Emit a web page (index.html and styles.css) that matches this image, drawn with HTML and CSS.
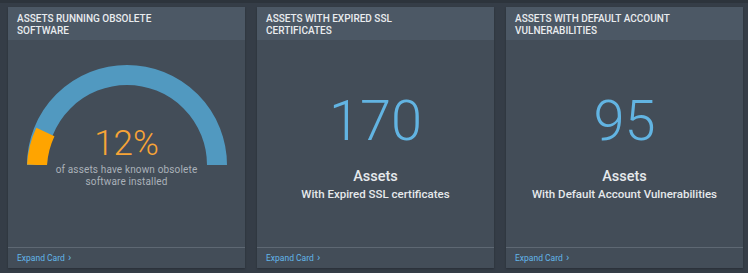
FILE: index.html
```html
<!DOCTYPE html>
<html lang="en">
  <head>
    <meta charset="UTF-8" />
    <meta name="viewport" content="width=device-width, initial-scale=1.0" />
    <title>Asset Cards</title>
    <link rel="stylesheet" href="styles.css">
  </head>
  <body>
    <div class="cards">
      <div class="card">
        <div class="card-header">Assets Running Obsolete Software</div>
        <div class="card-body">
          <div class="gauge">
            <svg width="200" height="100" viewBox="0 0 200 100">
              <path d="M 10 100 A 90 90 0 0 1 190 100" fill="none" stroke="#5199c0" stroke-width="20" />
              <path d="M 10 100 A 90 90 0 0 1 18.4 66.9" fill="none" stroke="#ffa400" stroke-width="20" />
            </svg>
            <div class="gauge-text">
              <div class="gauge-value">12%</div>
              <div class="gauge-label">of assets have known obsolete<br>software installed</div>
            </div>
          </div>
        </div>
        <div class="card-footer">Expand Card <span class="chev">&#8250;</span></div>
      </div>

      <div class="card">
        <div class="card-header">Assets With Expired SSL Certificates</div>
        <div class="card-body stat">
          <div class="stat-value">170</div>
          <div class="stat-title">Assets</div>
          <div class="stat-sub">With Expired SSL certificates</div>
        </div>
        <div class="card-footer">Expand Card <span class="chev">&#8250;</span></div>
      </div>

      <div class="card">
        <div class="card-header">Assets With Default Account Vulnerabilities</div>
        <div class="card-body stat">
          <div class="stat-value">95</div>
          <div class="stat-title">Assets</div>
          <div class="stat-sub">With Default Account Vulnerabilities</div>
        </div>
        <div class="card-footer">Expand Card <span class="chev">&#8250;</span></div>
      </div>
    </div>
  </body>
</html>
```

FILE: styles.css
```css
* {
  margin: 0;
  padding: 0;
  box-sizing: border-box;
}

body {
  font-family: Roboto, "Liberation Sans", Arial, sans-serif;
  background-color: #353d47;
  border-top: 3px solid #2d343c;
  height: 273px;
  overflow: hidden;
}

.cards {
  display: flex;
  gap: 12px;
  padding: 4px 5px 0 8px;
}

.card {
  flex: 1;
  height: 261px;
  background-color: #434d58;
  display: flex;
  flex-direction: column;
  box-shadow: 0 1px 2px rgba(0, 0, 0, 0.25);
}

.card-header {
  height: 33px;
  background-color: #4c5865;
  color: #e9ecef;
  font-size: 10px;
  font-weight: 500;
  line-height: 12px;
  text-transform: uppercase;
  padding: 6px 60px 0 9px;
}

.card-body {
  flex: 1;
}

.card-footer {
  height: 21px;
  border-top: 1px solid #5e6873;
  color: #62b6ea;
  font-size: 8.5px;
  line-height: 19px;
  padding-left: 9px;
}

.chev {
  font-size: 11px;
  margin-left: 1px;
}

/* gauge */
.gauge {
  position: relative;
  width: 200px;
  height: 100px;
  margin: 25px auto 0;
}

.gauge svg {
  display: block;
}

.gauge-text {
  position: absolute;
  top: 64px;
  left: -20px;
  right: -20px;
  text-align: center;
}

.gauge-value {
  color: #f7a436;
  font-size: 35px;
  font-weight: 300;
  line-height: 30px;
}

.gauge-label {
  color: #aab1b8;
  font-size: 10px;
  letter-spacing: 0.15px;
  line-height: 11.8px;
  margin-top: 5px;
}

/* stat cards */
.stat {
  text-align: center;
  padding-top: 53px;
}

.stat-value {
  color: #62b4e2;
  font-size: 56px;
  font-weight: 300;
  line-height: 56px;
}

.stat-title {
  color: #e6e9ec;
  font-size: 14.5px;
  font-weight: 500;
  line-height: 18px;
  margin-top: 19px;
}

.stat-sub {
  color: #e6e9ec;
  font-size: 11.5px;
  font-weight: 500;
  line-height: 14px;
  margin-top: 1px;
}
```
